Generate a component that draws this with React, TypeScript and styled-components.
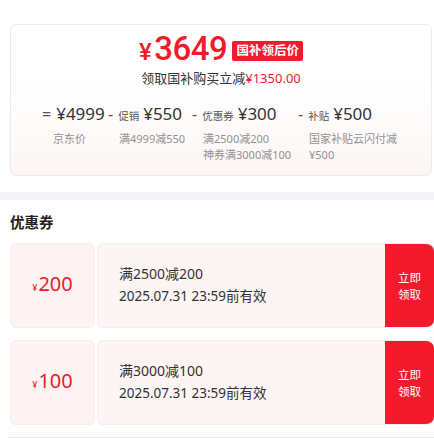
import React from "react";
import styled, { createGlobalStyle } from "styled-components";

const GlobalStyle = createGlobalStyle`
  body {
    margin: 0;
    background: #fff;
    font-family: "Noto Sans", "Noto Sans CJK SC", sans-serif;
    color: #333;
  }
`;

const RED = "#f31a2c";

type Part = { op: string; label?: string; amount: string; notes: string[]; width: number };

const parts: Part[] = [
  { op: "=", amount: "¥4999", notes: ["京东价"], width: 66 },
  { op: "-", label: "促销", amount: "¥550", notes: ["满4999减550"], width: 84 },
  { op: "-", label: "优惠券", amount: "¥300", notes: ["满2500减200", "神券满3000减100"], width: 106 },
  { op: "-", label: "补贴", amount: "¥500", notes: ["国家补贴云闪付减", "¥500"], width: 100 },
];

const coupons = [
  { value: "200", rule: "满2500减200", expire: "2025.07.31 23:59前有效" },
  { value: "100", rule: "满3000减100", expire: "2025.07.31 23:59前有效" },
];

const App: React.FC = () => {
  return (
    <Page>
      <GlobalStyle />
      <PriceCard>
        <PriceRow>
          <FinalPrice>
            <Yen>¥</Yen>3649
          </FinalPrice>
          <Badge>国补领后价</Badge>
        </PriceRow>
        <Saving>
          领取国补购买立减<em>¥1350.00</em>
        </Saving>
        <Formula>
          {parts.map((p) => (
            <Part key={p.amount + p.op} $width={p.width}>
              <PartMain>
                <Op>{p.op}</Op>
                {p.label && <PartLabel>{p.label}</PartLabel>}
                <Amount>{p.amount}</Amount>
              </PartMain>
              {p.notes.map((n) => (
                <Note key={n}>{n}</Note>
              ))}
            </Part>
          ))}
        </Formula>
      </PriceCard>
      <Band />
      <SectionTitle>优惠券</SectionTitle>
      <CouponList>
        {coupons.map((c) => (
          <Coupon key={c.rule}>
            <ValueBox>
              <small>¥</small>
              {c.value}
            </ValueBox>
            <CouponBody>
              <CouponInfo>
                <Rule>{c.rule}</Rule>
                <Expire>{c.expire}</Expire>
              </CouponInfo>
              <ClaimButton>
                <span>立即</span>
                <span>领取</span>
              </ClaimButton>
            </CouponBody>
          </Coupon>
        ))}
      </CouponList>
      <Divider />
    </Page>
  );
};

const Page = styled.div`
  width: 434px;
  padding-top: 24px;
`;

const PriceCard = styled.div`
  margin-left: 10px;
  width: 422px;
  height: 152px;
  box-sizing: border-box;
  border: 1px solid #ececec;
  border-radius: 6px;
  padding-top: 7px;
  background: linear-gradient(180deg, #ffffff 0%, #ffffff 35%, #fcf6f5 100%);
`;

const PriceRow = styled.div`
  display: flex;
  align-items: center;
  justify-content: center;
  height: 36px;
`;

const FinalPrice = styled.div`
  font-family: Roboto, "Noto Sans", sans-serif;
  font-weight: 500;
  font-size: 33px;
  line-height: 36px;
  letter-spacing: -0.5px;
  color: ${RED};
`;

const Yen = styled.span`
  font-size: 24px;
  margin-right: 3px;
`;

const Badge = styled.span`
  margin-left: 5px;
  margin-top: 2px;
  padding: 0 4px;
  height: 20px;
  line-height: 20px;
  background: ${RED};
  color: #fff;
  font-size: 12.5px;
  font-weight: 700;
  border-radius: 2px;
`;

const Saving = styled.div`
  margin-top: 1px;
  text-align: center;
  font-size: 13px;
  line-height: 18px;
  color: #333;

  em {
    font-style: normal;
    color: ${RED};
  }
`;

const Formula = styled.div`
  display: flex;
  margin-top: 16px;
  padding-left: 31px;
`;

const Part = styled.div<{ $width: number }>`
  width: ${(p) => p.$width}px;
  display: flex;
  flex-direction: column;
`;

const PartMain = styled.div`
  display: flex;
  align-items: baseline;
  white-space: nowrap;
  height: 22px;
  line-height: 22px;
  margin-bottom: 6px;
`;

const Op = styled.span`
  font-size: 16px;
  color: #555;
  margin-right: 5px;
`;

const PartLabel = styled.span`
  font-size: 10.5px;
  color: #555;
  margin-right: 4px;
`;

const Amount = styled.span`
  font-size: 17px;
  color: #333;
`;

const Note = styled.div`
  padding-left: 11px;
  font-size: 11px;
  line-height: 16px;
  color: #929292;
  white-space: nowrap;
`;

const Band = styled.div`
  margin-top: 16px;
  height: 8px;
  background: #f5f5f9;
`;

const SectionTitle = styled.div`
  margin: 11px 0 0 10px;
  font-size: 14.5px;
  font-weight: 700;
  line-height: 22px;
  color: #222;
`;

const CouponList = styled.div`
  margin: 10px 0 0 10px;
  display: flex;
  flex-direction: column;
  gap: 12px;
`;

const Coupon = styled.div`
  display: flex;
  height: 85px;
  gap: 2px;
`;

const ValueBox = styled.div`
  width: 85px;
  flex: none;
  display: flex;
  align-items: baseline;
  justify-content: center;
  padding-top: 28px;
  box-sizing: border-box;
  background: #fdf3f3;
  border: 1px solid #f9ecec;
  border-radius: 6px;
  color: #e8202c;
  font-size: 20px;
  line-height: 24px;

  small {
    font-size: 9px;
    margin-right: 1px;
  }
`;

const CouponBody = styled.div`
  flex: 1;
  display: flex;
  background: #fdf4f4;
  border: 1px solid #f9ecec;
  border-right: none;
  border-radius: 6px 8px 8px 6px;
  overflow: hidden;
`;

const CouponInfo = styled.div`
  flex: 1;
  display: flex;
  flex-direction: column;
  justify-content: center;
  padding-left: 21px;
  padding-bottom: 2px;
`;

const Rule = styled.div`
  font-size: 14px;
  line-height: 22px;
  color: #333;
`;

const Expire = styled.div`
  font-size: 13.5px;
  line-height: 22px;
  color: #333;
`;

const ClaimButton = styled.div`
  width: 49px;
  display: flex;
  flex-direction: column;
  align-items: center;
  justify-content: center;
  background: ${RED};
  color: #fff;
  font-size: 11.5px;
  line-height: 17px;
`;

const Divider = styled.div`
  margin: 12px 0 0 8px;
  border-top: 1px solid #ececec;
`;

export default App;
